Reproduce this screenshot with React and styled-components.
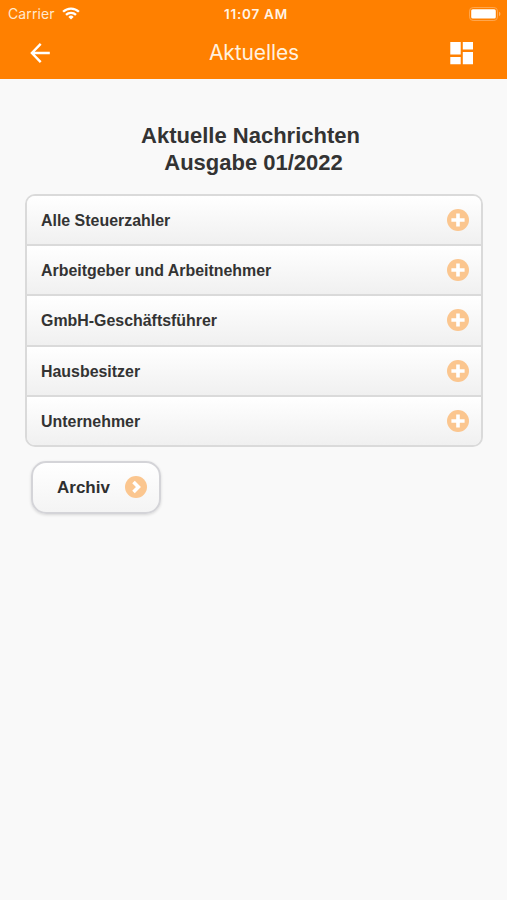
import styled, { createGlobalStyle } from "styled-components";

const topics = [
  "Alle Steuerzahler",
  "Arbeitgeber und Arbeitnehmer",
  "GmbH-Geschäftsführer",
  "Hausbesitzer",
  "Unternehmer",
];

export default function App() {
  return (
    <Screen>
      <GlobalStyle />
      <Header>
        <StatusBar>
          <Carrier>
            <span>Carrier</span>
            <WifiIcon />
          </Carrier>
          <Time>11:07 AM</Time>
          <BatteryIcon />
        </StatusBar>
        <NavBar>
          <NavButton aria-label="Zurück">
            <BackIcon />
          </NavButton>
          <NavTitle>Aktuelles</NavTitle>
          <NavButton aria-label="Übersicht" $end>
            <DashboardIcon />
          </NavButton>
        </NavBar>
      </Header>
      <Content>
        <Heading>
          Aktuelle Nachrichten
          <br />
          &nbsp;Ausgabe 01/2022
        </Heading>
        <List>
          {topics.map((topic) => (
            <Row key={topic}>
              <Label>{topic}</Label>
              <RoundIcon>
                <path d="M11 4.4v13.2M4.4 11h13.2" />
              </RoundIcon>
            </Row>
          ))}
        </List>
        <ArchiveButton>
          <Label>Archiv</Label>
          <RoundIcon>
            <path d="M8.5 6.1 13.4 11l-4.9 4.9" />
          </RoundIcon>
        </ArchiveButton>
      </Content>
    </Screen>
  );
}

function WifiIcon() {
  return (
    <svg width="18" height="13" viewBox="0 0 18 13" fill="none" stroke="#fff" strokeWidth="2.3">
      <path d="M1.1 4.8a11.2 11.2 0 0 1 15.8 0M4 7.9a7.1 7.1 0 0 1 10 0" />
      <path d="M9 12.5 6.4 9.9a3.7 3.7 0 0 1 5.2 0z" fill="#fff" stroke="none" />
    </svg>
  );
}

function BatteryIcon() {
  return (
    <svg width="33" height="14" viewBox="0 0 33 14">
      <rect x="0.5" y="0.5" width="28" height="13" rx="3.6" fill="none" stroke="#ffa64d" />
      <rect x="2.2" y="2.2" width="24.6" height="9.4" rx="1.6" fill="#fff" />
      <path d="M30 4.8a2.4 2.4 0 0 1 0 4.4z" fill="#ffb266" />
    </svg>
  );
}

function BackIcon() {
  return (
    <svg width="20" height="20" viewBox="0 0 20 20" fill="none" stroke="#fff" strokeWidth="2.4">
      <path d="M10.7 0.9 1.9 10l8.8 9.1M2 10H19.8" />
    </svg>
  );
}

function DashboardIcon() {
  return (
    <svg width="23" height="23" viewBox="0 0 23 23" fill="#fff">
      <path d="M0.3 0h10.4v12.4H0.3zM12.8 0H23v7.6H12.8zM0.3 14.9h10.4v7.4H0.3zM12.8 10H23v12.3H12.8z" />
    </svg>
  );
}

function RoundIcon({ children }) {
  return (
    <svg width="22" height="22" viewBox="0 0 22 22" fill="none" stroke="#fff" strokeWidth="3.6">
      <circle cx="11" cy="11" r="11" fill="#fbc68f" stroke="none" />
      {children}
    </svg>
  );
}

const GlobalStyle = createGlobalStyle`
  * {
    box-sizing: border-box;
  }

  body {
    margin: 0;
    background-color: #f9f9f9;
  }

  button {
    padding: 0;
    border: none;
    background: none;
  }

  svg {
    display: block;
    flex-shrink: 0;
  }
`;

const Screen = styled.div`
  min-height: 900px;
  color: #333333;
  background-color: #f9f9f9;
  font-family: "Liberation Sans", Arial, sans-serif;
`;

const Header = styled.header`
  height: 79px;
  color: white;
  background-color: #ff8000;
  font-family: Inter, sans-serif;
`;

const StatusBar = styled.div`
  height: 27px;
  display: grid;
  padding: 0 5px 0 8px;
  align-items: center;
  grid-template-columns: 1fr auto 1fr;
  font-size: 14px;

  > :last-child {
    justify-self: end;
  }
`;

const Carrier = styled.div`
  gap: 7px;
  display: flex;
  color: #ffe9cf;
  align-items: center;
  letter-spacing: 0.1px;
`;

const Time = styled.div`
  padding-left: 2px;
  color: #fff4e6;
  font-size: 13.5px;
  font-weight: 600;
  letter-spacing: 0.75px;
`;

const NavBar = styled.nav`
  height: 52px;
  display: grid;
  padding: 0 34px 0 30px;
  align-items: center;
  grid-template-columns: 1fr auto 1fr;
`;

const NavButton = styled.button`
  justify-self: ${(props) => (props.$end ? "end" : "start")};
`;

const NavTitle = styled.div`
  padding-left: 5px;
  color: #fff1df;
  font-size: 21px;
  line-height: 26px;
  letter-spacing: -0.1px;
`;

const Content = styled.main`
  padding: 43px 24px 0 25px;
`;

const Heading = styled.h1`
  margin: 0 0 18px;
  padding-right: 7px;
  font-size: 22px;
  font-weight: bold;
  line-height: 27px;
  text-align: center;
`;

const List = styled.div`
  overflow: hidden;
  border: 2px solid #dadada;
  border-radius: 10px;
`;

const Label = styled.span`
  padding-top: 2px;
`;

const Row = styled.div`
  height: 50.3px;
  display: flex;
  padding: 0 12px 0 14px;
  align-items: center;
  justify-content: space-between;
  font-size: 15.93px;
  font-weight: bold;
  line-height: 20px;
  background: linear-gradient(#ffffff, #f0f0f0);

  & + & {
    border-top: 2px solid #dadada;
  }

  &:first-child {
    height: 48px;
  }

  &:last-child {
    height: 50px;
  }
`;

const ArchiveButton = styled.button`
  && {
    width: 130px;
    height: 53px;
    gap: 15px;
    display: flex;
    margin: 14px 0 0 6px;
    padding: 0 12px 0 24px;
    align-items: center;
    color: #2f2f2f;
    font: bold 17px "Liberation Sans", Arial, sans-serif;
    border: 2px solid #d4d4d8;
    border-radius: 15px;
    background: linear-gradient(#ffffff, #f4f4f4);
    box-shadow: 0 1px 3px rgba(0, 0, 0, 0.14);
  }
`;
